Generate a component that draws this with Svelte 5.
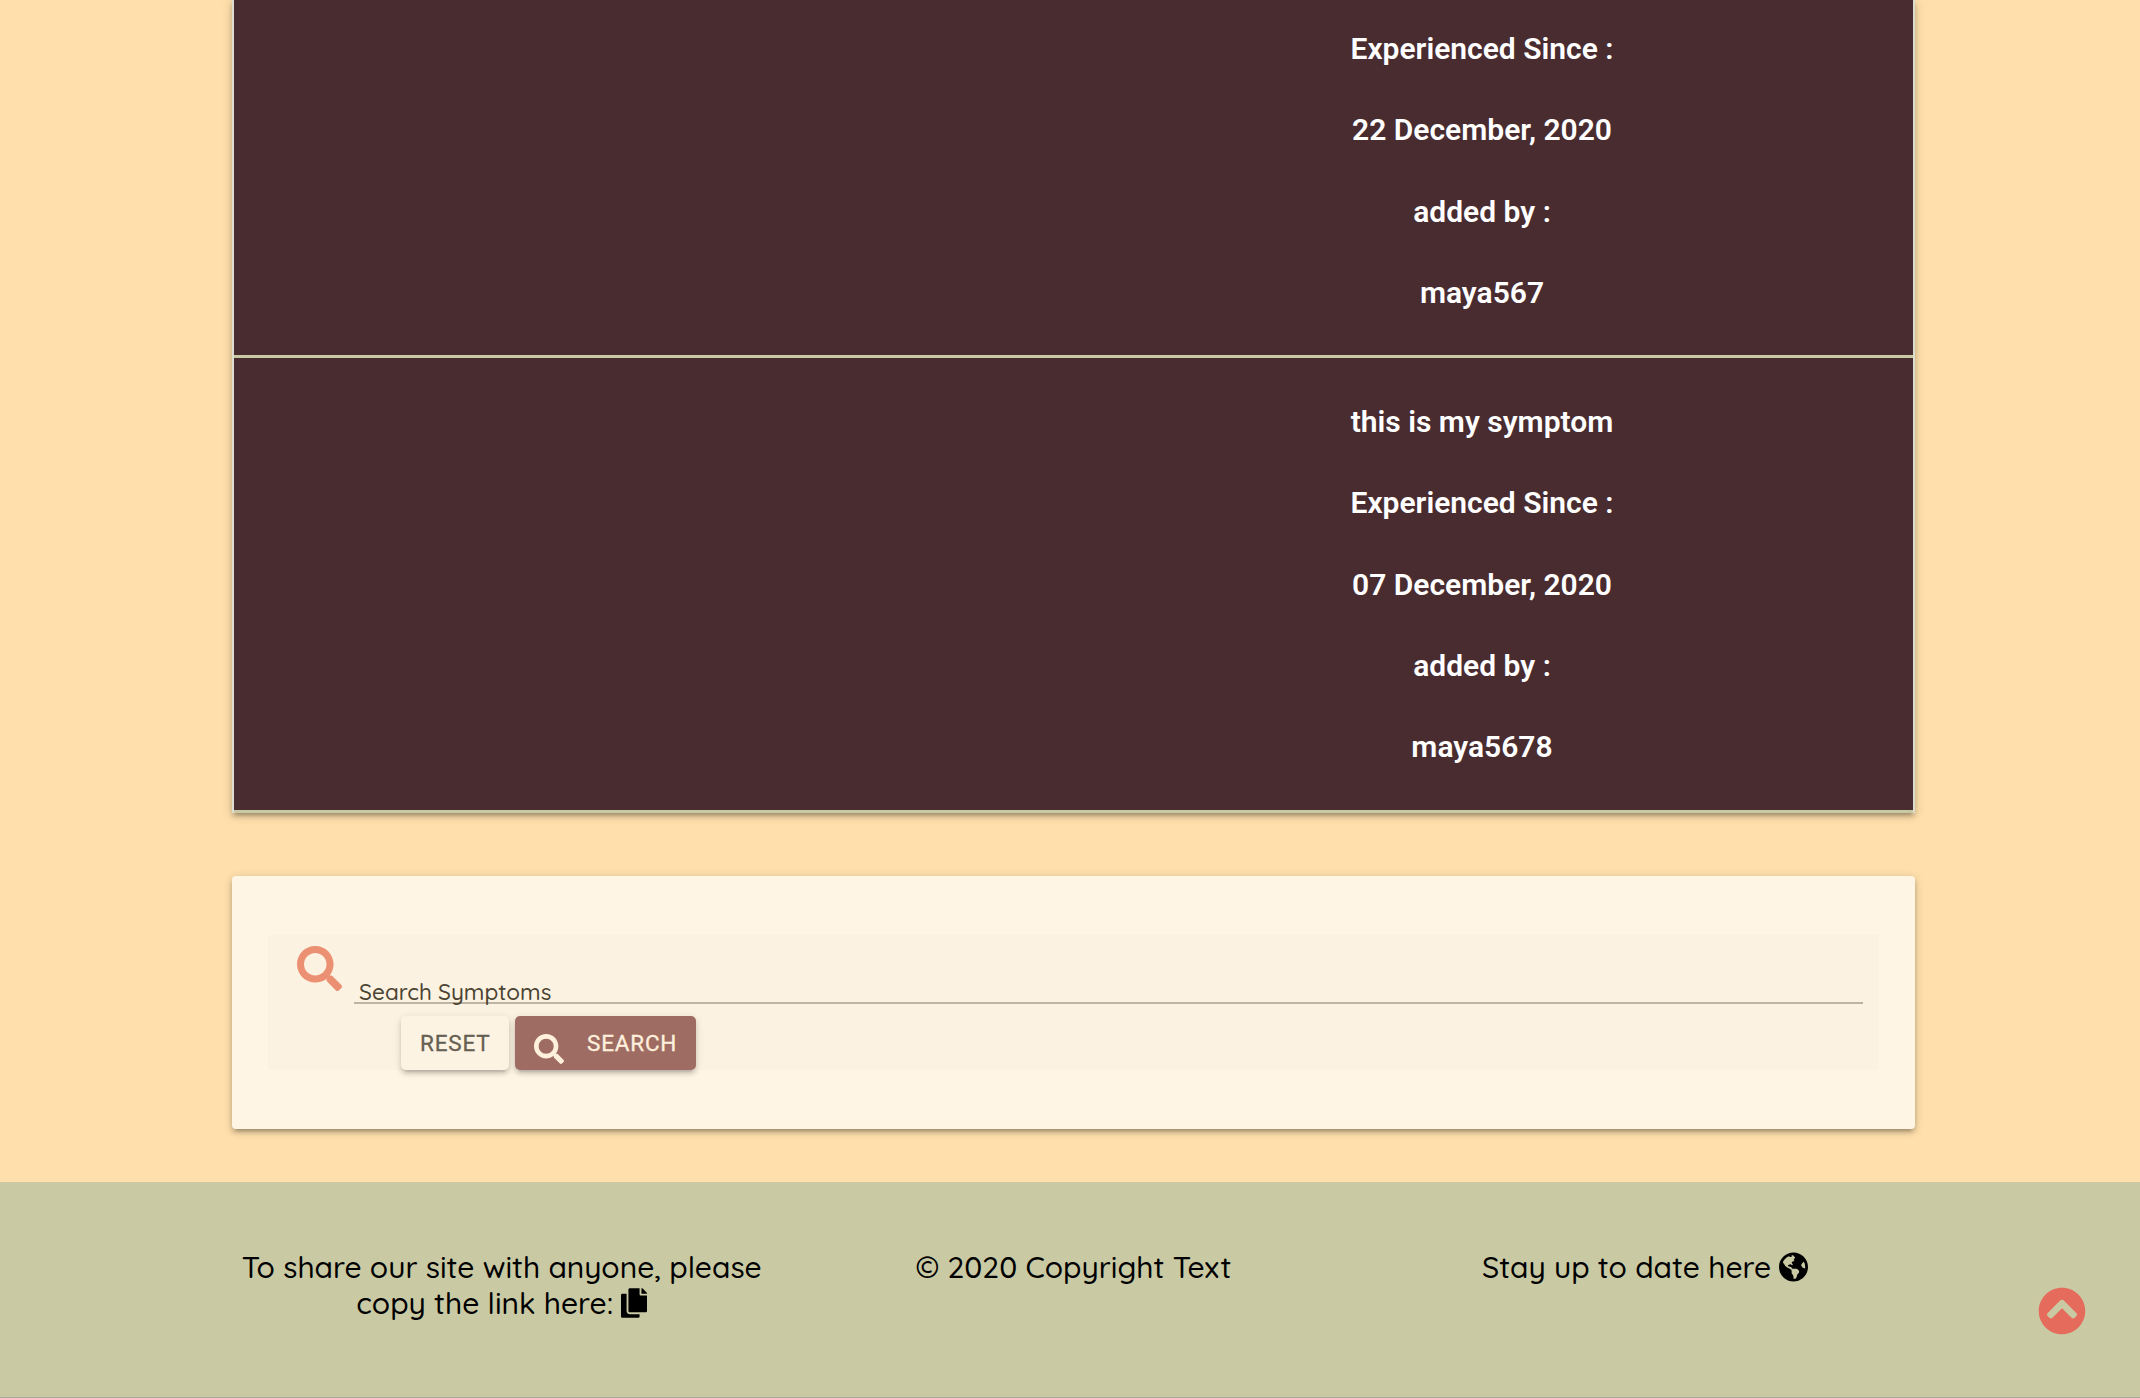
<script>
  const entries = [
    ['Experienced Since :', '22 December, 2020', 'added by :', 'maya567'],
    ['this is my symptom', 'Experienced Since :', '07 December, 2020', 'added by :', 'maya5678'],
  ];
  const magnifier = 'M505 442.7L405.3 343c-4.500-4.500-10.600-7-17-7H372c27.600-35.300 44-79.700 44-128C416 93.100 322.900 0 208 0S0 93.100 0 208s93.100 208 208 208c48.300 0 92.700-16.400 128-44v16.300c0 6.400 2.500 12.500 7 17l99.700 99.700c9.400 9.400 24.600 9.400 33.900 0l28.300-28.300c9.400-9.400 9.400-24.600.1-34zM208 336c-70.700 0-128-57.200-128-128 0-70.700 57.200-128 128-128 70.700 0 128 57.200 128 128 0 70.700-57.200 128-128 128z';
</script>

<div class="page">
  <main>
    <section class="collection">
      {#each entries as lines}
        <article class="entry">
          <div class="details">
            {#each lines as line}<p>{line}</p>{/each}
          </div>
        </article>
      {/each}
    </section>

    <form class="search-card" onsubmit={(e) => e.preventDefault()}>
      <div class="search-area">
        <div class="field">
          <svg class="prefix" viewBox="0 0 512 512"><path d={magnifier} /></svg>
          <div class="input"><span class="label">Search Symptoms</span></div>
        </div>
        <div class="buttons">
          <button class="btn reset" type="reset">RESET</button>
          <button class="btn go" type="submit">
            <svg viewBox="0 0 512 512"><path d={magnifier} /></svg>
            <span>SEARCH</span>
          </button>
        </div>
      </div>
    </form>
  </main>

  <footer>
    <div class="columns">
      <p>To share our site with anyone, please<br />copy the link here:
        <svg class="copy" viewBox="0 0 448 512"><path d="M320 448v40c0 13.255-10.745 24-24 24H24c-13.255 0-24-10.745-24-24V120c0-13.255 10.745-24 24-24h72v296c0 30.879 25.121 56 56 56h168zm0-344V0H152c-13.255 0-24 10.745-24 24v368c0 13.255 10.745 24 24 24h272c13.255 0 24-10.745 24-24V128H344c-13.200 0-24-10.800-24-24zm120.971-31.029L375.029 7.029A24 24 0 0 0 358.059 0H352v96h96v-6.059a24 24 0 0 0-7.029-16.970z" /></svg>
      </p>
      <p>© 2020 Copyright Text</p>
      <p>Stay up to date here
        <svg class="globe" viewBox="0 0 496 512"><path d="M248 8C111.030 8 0 119.030 0 256s111.030 248 248 248 248-111.030 248-248S384.970 8 248 8zm82.290 357.600c-3.900 3.880-7.990 7.950-11.310 11.280-2.990 3-5.100 6.700-6.170 10.710-1.510 5.660-2.730 11.380-4.770 16.870l-17.390 46.850c-13.760 3-28 4.690-42.650 4.690v-27.380c1.690-12.620-7.640-36.260-22.630-51.250-6-6-9.370-14.140-9.370-22.630v-32.010c0-11.640-6.270-22.340-16.460-27.970-14.370-7.950-34.810-19.060-48.810-26.110-11.480-5.780-22.100-13.140-31.650-21.750l-.8-.72a114.792 114.792 0 0 1-18.060-20.740c-9.380-13.770-24.660-36.420-34.590-51.140 20.470-45.500 57.360-82.040 103.200-101.890l24.010 12.010C203.480 89.740 216 82.010 216 70.110v-11.300c7.990-1.290 16.120-2.110 24.390-2.420l28.300 28.300c6.250 6.250 6.250 16.380 0 22.630L264 112l-10.340 10.340c-3.120 3.120-3.120 8.190 0 11.310l4.690 4.690c3.120 3.120 3.120 8.190 0 11.310l-8 8a8.008 8.008 0 0 1-5.660 2.340h-8.990c-2.080 0-4.080.81-5.580 2.270l-9.920 9.650a8.008 8.008 0 0 0-1.580 9.310l15.590 31.190c2.660 5.320-1.210 11.580-7.150 11.580h-5.640c-1.930 0-3.790-.7-5.240-1.960l-9.280-8.060a16.017 16.017 0 0 0-15.550-3.100l-31.170 10.390a11.950 11.950 0 0 0-8.170 11.340c0 4.530 2.560 8.660 6.610 10.690l11.080 5.540c9.410 4.710 19.790 7.160 30.310 7.160s22.590 27.290 32 32h66.750c8.490 0 16.620 3.370 22.630 9.370l13.690 13.690a30.503 30.503 0 0 1 8.930 21.570 46.536 46.536 0 0 1-13.720 32.980zM417 274.250c-5.790-1.450-10.840-5-14.150-9.970l-17.980-26.970a23.970 23.970 0 0 1 0-26.620l19.590-29.380c2.320-3.470 5.500-6.290 9.240-8.150l12.980-6.490C440.200 193.590 448 223.870 448 256c0 8.670-.74 17.160-1.820 25.540L417 274.250z" /></svg>
      </p>
    </div>
    <a class="to-top" href="#top" aria-label="Back to top">
      <svg viewBox="0 0 512 512"><path d="M8 256C8 119 119 8 256 8s248 111 248 248-111 248-248 248S8 393 8 256zm231-113.900L103.500 277.600c-9.400 9.400-9.400 24.600 0 33.900l17 17c9.400 9.400 24.600 9.400 33.900 0L256 226.900l101.600 101.600c9.400 9.400 24.600 9.400 33.900 0l17-17c9.400-9.400 9.400-24.600 0-33.900L273 142.100c-9.400-9.400-24.600-9.400-34 0z" /></svg>
    </a>
  </footer>
</div>

<style>
  :global(body) { background: #ffe0ac; }
  * { box-sizing: border-box; }
  .page {
    height: 1398px;
    display: flex;
    flex-direction: column;
    overflow: hidden;
    background: #ffe0ac;
    font-family: Quicksand, Lato, sans-serif;
  }
  main { width: 1683px; margin-left: 232px; flex: none; }
  .collection {
    border: solid #dcdcd0;
    border-width: 0 2px;
    box-shadow: 0 4px 4px rgba(0,0,0,.14), 0 6px 2px -4px rgba(0,0,0,.12), 0 2px 10px rgba(0,0,0,.2);
  }
  .entry {
    background: #492c30;
    border-bottom: 3px solid #c9caa4;
    display: grid;
    grid-template-columns: 817px 862px;
    height: 455px;
    padding-top: 22px;
  }
  .entry:first-child { height: 358px; padding-top: 8px; }
  .entry:last-child { padding-top: 23px; }
  .details { grid-column: 2; }
  .details p {
    margin: 0;
    height: 81.25px;
    line-height: 81.25px;
    text-align: center;
    color: #fff;
    font-family: Roboto, sans-serif;
    font-weight: 600;
    font-size: 30px;
  }
  .search-card {
    margin: 63px 0 53px;
    height: 253px;
    padding: 59px 36px;
    border-radius: 4px;
    background: #fff5e4;
    box-shadow: 0 4px 4px rgba(0,0,0,.14), 0 6px 2px -4px rgba(0,0,0,.12), 0 2px 10px rgba(0,0,0,.2);
  }
  .search-area { height: 135px; background: #fcf2e1; padding-left: 29px; }
  .field { display: flex; height: 69px; }
  .prefix { width: 45px; height: 45px; margin: 11px 12px 0 0; fill: #ec9073; }
  .input {
    width: 1509px;
    border-bottom: 2px solid #bdb4a3;
    padding: 44px 0 0 5px;
    line-height: 26px;
  }
  .label { color: #4b4433; font-size: 22.5px; font-weight: 500; white-space: nowrap; }
  .buttons { display: flex; gap: 6px; padding: 12px 0 0 104px; }
  .btn {
    height: 54px;
    border: 0;
    border-radius: 5px;
    padding: 0;
    display: flex;
    align-items: center;
    font: 400 22.5px/54px Roboto, sans-serif;
    letter-spacing: .8px;
    -webkit-text-stroke: .3px currentColor;
    box-shadow: 0 4px 4px rgba(0,0,0,.12), 0 6px 2px -4px rgba(0,0,0,.1), 0 2px 8px rgba(0,0,0,.12);
  }
  .reset { width: 108px; padding-left: 19px; background: #fdf3e2; color: #656052; }
  .go { width: 181px; padding-left: 19px; background: #9e6c63; color: #fff0dc; }
  .go svg { width: 30px; height: 30px; margin: 11px 23px 0 0; fill: #fff0dc; }
  footer {
    position: relative;
    height: 216px;
    flex: none;
    background: #c9caa4;
    border-bottom: 1px solid #a9a9a0;
  }
  .columns {
    width: 1715px;
    margin-left: 216px;
    padding-top: 67px;
    display: grid;
    grid-template-columns: repeat(3, 1fr);
    text-align: center;
  }
  .columns p { margin: 0; font-size: 30px; font-weight: 500; line-height: 36px; white-space: nowrap; }
  .copy { width: 26px; height: 30px; vertical-align: -4px; }
  .globe { width: 29px; height: 30px; vertical-align: -4px; }
  .to-top { position: absolute; left: 2038px; top: 105px; width: 48px; height: 48px; }
  .to-top svg { display: block; width: 48px; height: 48px; fill: #e56b5d; }
</style>
